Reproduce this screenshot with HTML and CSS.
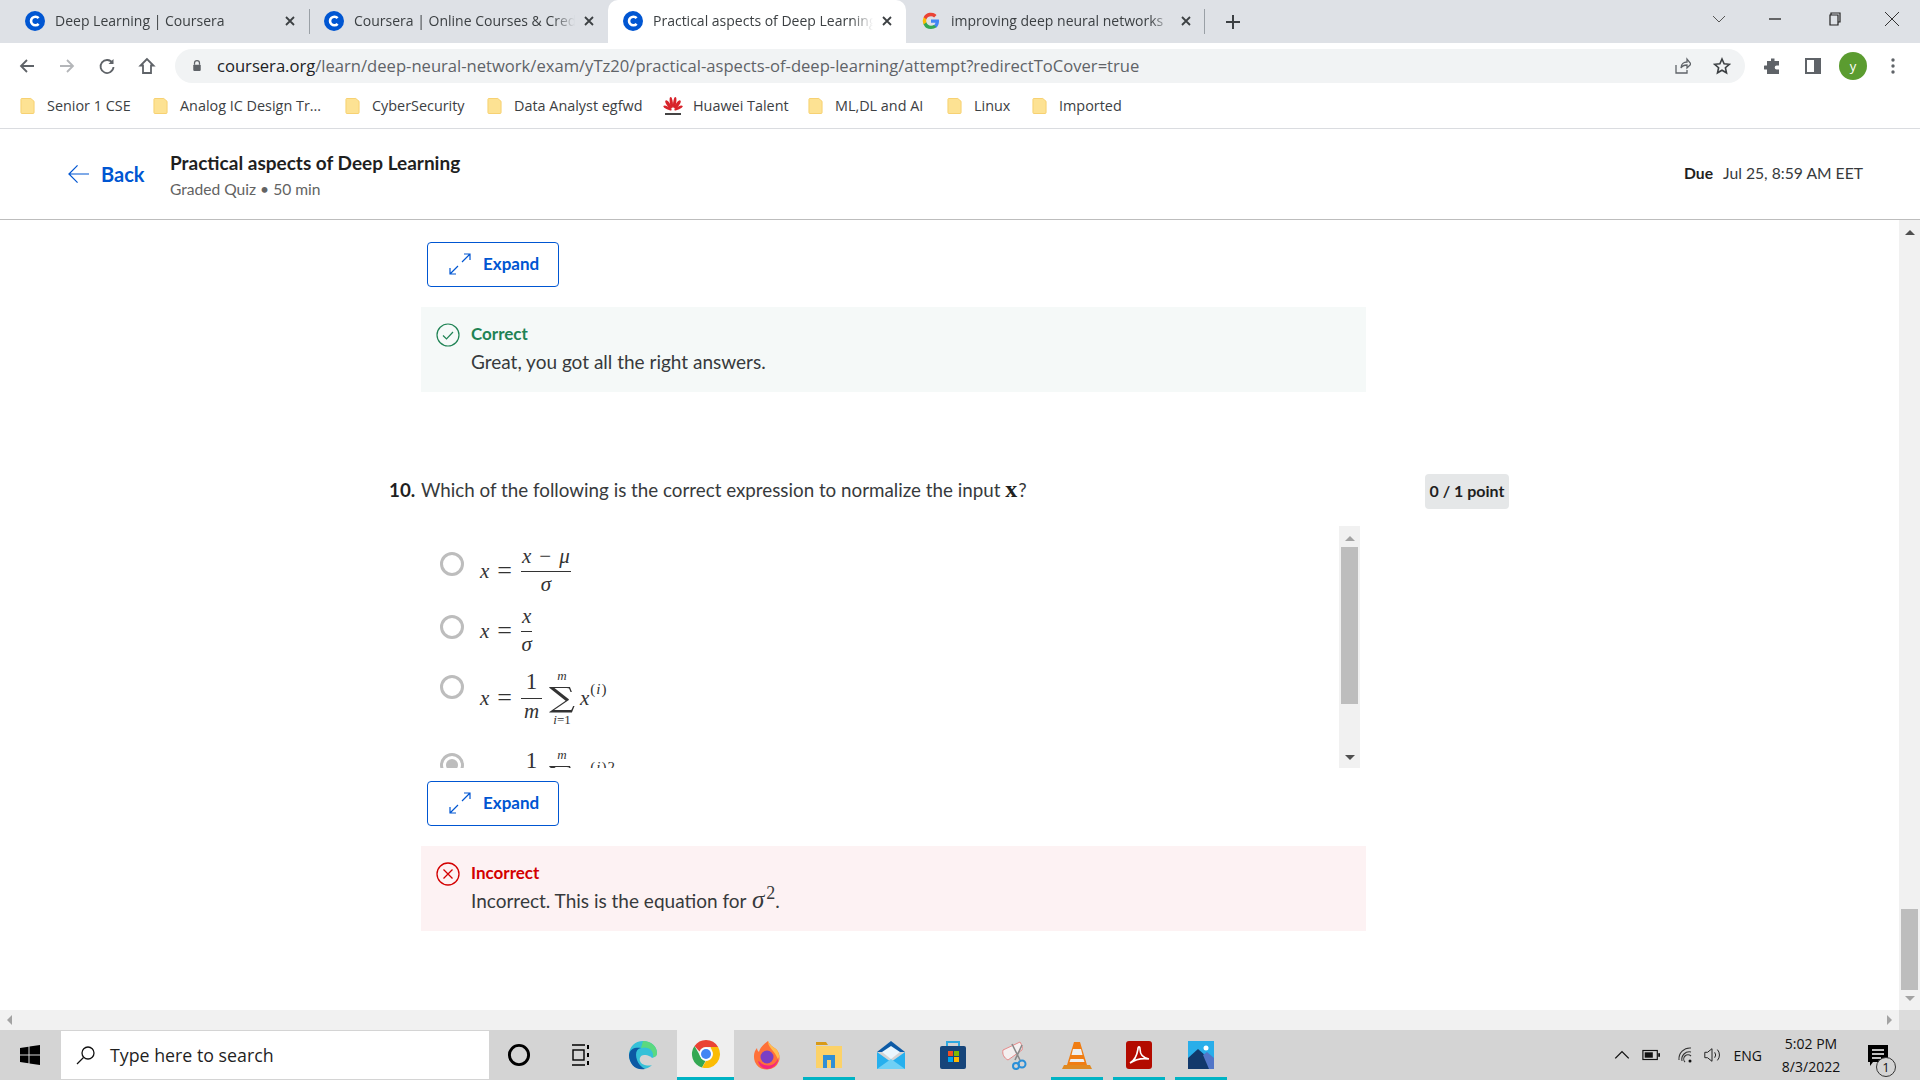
FILE: index.html
```html
<!DOCTYPE html>
<html lang="en">
<head>
<meta charset="utf-8">
<title>Practical aspects of Deep Learning | Coursera</title>
<link rel="stylesheet" href="styles.css">
</head>
<body>
<svg class="defs" width="0" height="0" aria-hidden="true">
  <symbol id="coursera" viewBox="0 0 20 20"><circle cx="10" cy="10" r="10" fill="#0056d2"/><path d="M13.6 7.2A4.3 4.3 0 1 0 13.6 12.8" fill="none" stroke="#fff" stroke-width="2.6"/></symbol>
  <symbol id="close" viewBox="0 0 12 12"><path d="M2 2L10 10M10 2L2 10" stroke="#3c4043" stroke-width="1.8" fill="none"/></symbol>
  <symbol id="folder" viewBox="0 0 16 18"><path d="M1.5 1h10l3.500 3v12a1 1 0 0 1-1 1H2a1 1 0 0 1-1-1V2z" fill="#fde293" stroke="#f6cf6c"/></symbol>
  <symbol id="expand" viewBox="0 0 24 24"><path d="M2 22L10 14M14 10L22 2M16 2H22V8M2 16V22H8" fill="none" stroke="#0056d2" stroke-width="1.200"/></symbol>
</svg>

<header class="tabbar">
  <div class="tab"><svg class="fav"><use href="#coursera"/></svg><span class="tab-title">Deep Learning | Coursera</span><svg class="tab-x"><use href="#close"/></svg></div>
  <div class="tab tab-sep"><svg class="fav"><use href="#coursera"/></svg><span class="tab-title">Coursera | Online Courses &amp; Credentials</span><svg class="tab-x"><use href="#close"/></svg></div>
  <div class="tab tab-active"><svg class="fav"><use href="#coursera"/></svg><span class="tab-title">Practical aspects of Deep Learning</span><svg class="tab-x"><use href="#close"/></svg></div>
  <div class="tab tab-end">
    <svg class="fav" viewBox="0 0 20 20"><path d="M18 10.200c0-.6 0-1.200-.2-1.700H10v3.300h4.500a3.800 3.800 0 0 1-1.700 2.500v2.100h2.700c1.600-1.500 2.500-3.600 2.500-6.200z" fill="#4285f4"/><path d="M10 18c2.200 0 4.100-.7 5.500-2l-2.700-2.100c-.7.500-1.700.8-2.800.8-2.100 0-3.900-1.400-4.600-3.400H2.600v2.100A8 8 0 0 0 10 18z" fill="#34a853"/><path d="M5.400 11.300a4.800 4.800 0 0 1 0-3V6.200H2.600a8 8 0 0 0 0 7.200z" fill="#fbbc05"/><path d="M10 5.200c1.200 0 2.300.4 3.100 1.200l2.400-2.400A8 8 0 0 0 2.600 6.200l2.800 2.100c.7-1.900 2.500-3.100 4.600-3.100z" fill="#ea4335"/></svg>
    <span class="tab-title">improving deep neural networks</span><svg class="tab-x"><use href="#close"/></svg></div>
  <svg class="newtab" viewBox="0 0 16 16"><path d="M8 1v14M1 8h14" stroke="#3c4043" stroke-width="2"/></svg>
  <div class="winctl">
    <svg class="wc" viewBox="0 0 14 14"><path d="M1 4l6 6 6-6" fill="none" stroke="#555" stroke-width="1"/></svg>
    <svg class="wc" viewBox="0 0 14 14"><path d="M1 7h12" stroke="#222" stroke-width="1.300"/></svg>
    <svg class="wc" viewBox="0 0 14 14"><path d="M3 3V1h9v9h-2M2 3h8v10H2z" fill="none" stroke="#222" stroke-width="1.200"/></svg>
    <svg class="wc" viewBox="0 0 14 14"><path d="M0 0l14 14M14 0L0 14" stroke="#333" stroke-width="1"/></svg>
  </div>
</header>

<nav class="toolbar">
  <svg class="tool" viewBox="0 0 18 18"><path d="M16 9H3M9 3L3 9l6 6" fill="none" stroke="#5f6368" stroke-width="1.800"/></svg>
  <svg class="tool" viewBox="0 0 18 18"><path d="M2 9h13M9 3l6 6-6 6" fill="none" stroke="#b4b6b9" stroke-width="1.800"/></svg>
  <svg class="tool" viewBox="0 0 18 18"><path d="M14.500 6A6.500 6.500 0 1 0 15.500 10" fill="none" stroke="#5f6368" stroke-width="1.800"/><path d="M15.500 2v5h-5z" fill="#5f6368"/></svg>
  <svg class="tool" viewBox="0 0 18 18"><path d="M9 2L2.500 8.500H5V16h8V8.500h2.500z" fill="none" stroke="#5f6368" stroke-width="1.800"/></svg>
  <div class="omnibox">
    <svg class="lock" viewBox="0 0 12 14"><path d="M3 6V4a3 3 0 0 1 6 0v2" fill="none" stroke="#5f6368" stroke-width="1.500"/><rect x="1.500" y="6" width="9" height="7.500" rx="1" fill="#5f6368"/></svg>
    <span class="url"><span class="url-host">coursera.org</span>/learn/deep-neural-network/exam/yTz20/practical-aspects-of-deep-learning/attempt?redirectToCover=true</span>
    <svg class="omni-ic" viewBox="0 0 18 18"><path d="M3 8v8h11v-3M8 11c0-4 3-6 6-6V2l4 5-4 4V8c-3 0-5 1-6 3z" fill="none" stroke="#5f6368" stroke-width="1.300"/></svg>
    <svg class="omni-ic" viewBox="0 0 18 18"><path d="M9 2l2.100 4.800 5.200.5-3.900 3.400 1.100 5.100L9 13.200l-4.500 2.600 1.100-5.100-3.900-3.400 5.200-.5z" fill="none" stroke="#3c4043" stroke-width="1.600"/></svg>
  </div>
  <svg class="tool-r ext" viewBox="0 0 18 18"><path d="M7 1.500h3.500V4H15v4.500h-2.300a2 2 0 0 0 0 4H15V17H3v-4.500H1a2 2 0 0 1 0-4h2V4h4z" fill="#5f6368"/></svg>
  <svg class="tool-r" viewBox="0 0 18 18"><rect x="2" y="2" width="14" height="14" fill="none" stroke="#5f6368" stroke-width="2"/><rect x="10" y="2" width="6" height="14" fill="#5f6368"/></svg>
  <span class="avatar">y</span>
  <svg class="tool-dots" viewBox="0 0 4 18"><circle cx="2" cy="3" r="1.700" fill="#5f6368"/><circle cx="2" cy="9" r="1.700" fill="#5f6368"/><circle cx="2" cy="15" r="1.700" fill="#5f6368"/></svg>
</nav>

<div class="bookmarks">
  <div class="bm"><svg class="bm-ic"><use href="#folder"/></svg>Senior 1 CSE</div>
  <div class="bm"><svg class="bm-ic"><use href="#folder"/></svg>Analog IC Design Tr...</div>
  <div class="bm"><svg class="bm-ic"><use href="#folder"/></svg>CyberSecurity</div>
  <div class="bm"><svg class="bm-ic"><use href="#folder"/></svg>Data Analyst egfwd</div>
  <div class="bm bm-hw"><svg class="bm-ic hw" viewBox="0 0 20 20"><g fill="#d8232a"><ellipse cx="8.300" cy="6.500" rx="1.500" ry="5.500" transform="rotate(-8 8.300 6.500)"/><ellipse cx="11.700" cy="6.500" rx="1.500" ry="5.500" transform="rotate(8 11.700 6.500)"/><ellipse cx="5.500" cy="8.500" rx="1.700" ry="5" transform="rotate(-35 5.500 8.500)"/><ellipse cx="14.500" cy="8.500" rx="1.700" ry="5" transform="rotate(35 14.500 8.500)"/><ellipse cx="4.500" cy="12" rx="1.500" ry="4.500" transform="rotate(-65 4.500 12)"/><ellipse cx="15.500" cy="12" rx="1.500" ry="4.500" transform="rotate(65 15.500 12)"/></g><rect x="2" y="17" width="16" height="2" fill="#444"/></svg>Huawei Talent</div>
  <div class="bm"><svg class="bm-ic"><use href="#folder"/></svg>ML,DL and AI</div>
  <div class="bm"><svg class="bm-ic"><use href="#folder"/></svg>Linux</div>
  <div class="bm"><svg class="bm-ic"><use href="#folder"/></svg>Imported</div>
</div>

<div class="quiz-head">
  <a class="back"><svg class="back-ic" viewBox="0 0 22 20"><path d="M22 10H1M10 1l-9 9 9 9" fill="none" stroke="#0056d2" stroke-width="1.300"/></svg>Back</a>
  <div class="head-titles">
    <div class="head-title">Practical aspects of Deep Learning</div>
    <div class="head-sub">Graded Quiz • 50 min</div>
  </div>
  <div class="due"><b>Due</b><span>Jul 25, 8:59 AM EET</span></div>
</div>

<div class="viewport">
  <main class="content">
    <div class="quiz">
      <a class="expand"><svg class="expand-ic"><use href="#expand"/></svg>Expand</a>
      <section class="feedback ok">
        <svg class="fb-ic" viewBox="0 0 24 24"><circle cx="12" cy="12" r="11" fill="none" stroke="#1f8354" stroke-width="1.200"/><path d="M7 12.500l3.500 3.500L17 9" fill="none" stroke="#1f8354" stroke-width="1.200"/></svg>
        <div><div class="fb-head ok-text">Correct</div><div class="fb-body">Great, you got all the right answers.</div></div>
      </section>
      <div class="qrow">
        <div class="qtext"><b class="qnum">10.</b>Which of the following is the correct expression to normalize the input <b class="mathb">x</b>?</div>
        <div class="chip">0 / 1 point</div>
      </div>
      <div class="optbox">
        <div class="opts">
          <div class="opt opt1"><span class="radio"></span><div class="math m1"><i>x</i><span class="eq">=</span><span class="frac"><span class="num"><i>x</i><span class="minus">−</span><i>μ</i></span><span class="den"><i>σ</i></span></span></div></div>
          <div class="opt opt2"><span class="radio"></span><div class="math m2"><i>x</i><span class="eq">=</span><span class="frac"><span class="num"><i>x</i></span><span class="den"><i>σ</i></span></span></div></div>
          <div class="opt opt3"><span class="radio"></span><div class="math m3"><i>x</i><span class="eq">=</span><span class="frac big"><span class="num">1</span><span class="den"><i>m</i></span></span><span class="sum"><small><i>m</i></small><span class="sigma">∑</span><small><i>i</i>=1</small></span><i>x</i><sup>(<i>i</i>)</sup></div></div>
          <div class="opt opt4"><span class="radio on"></span><div class="math m4"><i>x</i><span class="eq">=</span><span class="frac big"><span class="num">1</span><span class="den"><i>m</i></span></span><span class="sum"><small><i>m</i></small><span class="sigma">∑</span><small><i>i</i>=1</small></span><i>x</i><sup>(<i>i</i>)2</sup></div></div>
        </div>
        <div class="sbar inner">
          <span class="arr up dim"></span>
          <span class="thumb inner-thumb"></span>
          <span class="arr down"></span>
        </div>
      </div>
      <a class="expand expand2"><svg class="expand-ic"><use href="#expand"/></svg>Expand</a>
      <section class="feedback bad">
        <svg class="fb-ic" viewBox="0 0 24 24"><circle cx="12" cy="12" r="11" fill="none" stroke="#d30001" stroke-width="1.300"/><path d="M7.500 7.500l9 9M16.500 7.500l-9 9" fill="none" stroke="#d30001" stroke-width="1.300"/></svg>
        <div><div class="fb-head bad-text">Incorrect</div><div class="fb-body">Incorrect. This is the equation for <span class="inl"><i>σ</i><sup>2</sup></span>.</div></div>
      </section>
    </div>
  </main>
  <div class="sbar page">
    <span class="arr up"></span>
    <span class="thumb page-thumb"></span>
    <span class="arr down dim"></span>
  </div>
</div>

<div class="hscroll"><span class="arr left dim"></span><span class="arr right dim"></span><span class="corner"></span></div>

<footer class="taskbar">
  <svg class="start" viewBox="0 0 20 20"><path d="M0 3l8.500-1.200v7.700H0zM9.500 1.600L20 0v9.500H9.500zM0 10.500h8.500v7.700L0 17zM9.500 10.500H20V20L9.500 18.400z" fill="#000"/></svg>
  <div class="search"><svg class="search-ic" viewBox="0 0 20 20"><circle cx="12" cy="8" r="6" fill="none" stroke="#111" stroke-width="1.300"/><path d="M7.500 12.500L1 19" stroke="#111" stroke-width="1.300"/></svg><span>Type here to search</span></div>
  <div class="tb-apps">
    <div class="app"><svg class="cortana" viewBox="0 0 20 20"><circle cx="10" cy="10" r="8" fill="none" stroke="#000" stroke-width="2.400"/></svg></div>
    <div class="app"><svg class="taskview" viewBox="0 0 20 22"><path d="M1 1h13M1 21h13M15 1v0" stroke="#000" stroke-width="1.400"/><rect x="2" y="6" width="11" height="10" fill="none" stroke="#000" stroke-width="1.400"/><path d="M17 1v4M17 9v4M17 17v4" stroke="#000" stroke-width="2"/></svg></div>
    <div class="app"><svg class="appic" viewBox="0 0 30 30"><path d="M15 1C7 1 1 7 1 15c0 8 6 14 13 14 5 0 8-2 10-4-3 1-10 1-12-4-1-3 1-6 4-6 5 0 7 2 8 3 3-1 5-2 5-5C29 6 23 1 15 1z" fill="#35c1d8"/><path d="M1 15C2 8 8 7 13 8c-5 1-6 6-4 12 1 3 4 7 8 9-9 2-16-5-16-14z" fill="#0c59a4"/><path d="M15 1c8 0 14 5 14 12 0 3-2 4-4 4 1-7-5-11-12-9z" fill="#5bd97f"/></svg></div>
    <div class="app app-chrome"><svg class="appic" viewBox="0 0 30 30"><path d="M15 1a14 14 0 0 1 12.100 7H15a7 7 0 0 0-6.500 4.500L3.500 7A14 14 0 0 1 15 1z" fill="#ea4335"/><path d="M3.500 7l6 10.500a7 7 0 0 0 5 4.500L11 28.500A14 14 0 0 1 3.500 7z" fill="#34a853"/><path d="M27.100 8A14 14 0 0 1 11 28.500L15 22a7 7 0 0 0 6-10.500L19.500 8z" fill="#fbbc05"/><circle cx="15" cy="15" r="6.500" fill="#fff"/><circle cx="15" cy="15" r="5" fill="#4285f4"/></svg></div>
    <div class="app"><svg class="appic" viewBox="0 0 30 30"><path d="M16 1c1 3 5 6 8 8 4 4 4 9 3 12a13 13 0 0 1-24 1C1 17 2 11 5 8c0 2 1 3 2 4 1-5 5-8 9-11z" fill="#ff7139"/><path d="M16 1c1 3 5 6 8 8 3 3 4 8 3 12-2-3-3-7-6-10-2-3-5-5-5-10z" fill="#ffbd4f"/><circle cx="15" cy="17" r="6.500" fill="#7b3fc4"/><path d="M8 22c3 4 10 5 15 1 2-2 3-4 4-6-1 8-7 12-12 12-4 0-8-3-9-8z" fill="#f5267e"/></svg></div>
    <div class="app app-run"><svg class="appic" viewBox="0 0 30 30"><path d="M2 2h10l2 3H2z" fill="#d89a18"/><path d="M2 6h26v22H2z" fill="#fcd268"/><path d="M9 28V15h12v13h-4v-8h-4v8z" fill="#2f8fd6"/></svg></div>
    <div class="app"><svg class="appic" viewBox="0 0 30 30"><path d="M15 1L1 12h28z" fill="#0c5aa6"/><path d="M1 12l14 10 14-10v17H1z" fill="#26b0ee"/><path d="M6 12l9-6 9 6-9 7z" fill="#e9f6fd"/><path d="M1 29l14-10 14 10z" fill="#6fd0f5"/></svg></div>
    <div class="app"><svg class="appic" viewBox="0 0 30 30"><path d="M9 6V2h12v4" fill="none" stroke="#2fa8e0" stroke-width="2"/><rect x="2" y="6" width="26" height="23" rx="2" fill="#16457a"/><rect x="10" y="11" width="5" height="5" fill="#f25022"/><rect x="16" y="11" width="5" height="5" fill="#7fba00"/><rect x="10" y="17" width="5" height="5" fill="#00a4ef"/><rect x="16" y="17" width="5" height="5" fill="#ffb900"/></svg></div>
    <div class="app"><svg class="appic" viewBox="0 0 30 30"><path d="M3 10L20 2c2 3 3 6 2 8L8 20C4 18 2 14 3 10z" fill="#f4f0f0" stroke="#e68a8a"/><path d="M12 4l8 16M22 5L15 20" stroke="#8a8a8a" stroke-width="1.600"/><circle cx="22" cy="24" r="3.500" fill="none" stroke="#2a8fd8" stroke-width="2"/><circle cx="16" cy="26" r="3" fill="none" stroke="#2a8fd8" stroke-width="2"/></svg></div>
    <div class="app app-run"><svg class="appic" viewBox="0 0 30 30"><path d="M12 2h6l7 23H5z" fill="#f07d13"/><path d="M11 9h8l1.500 6h-11z" fill="#eee"/><path d="M8.500 19h13l1 3h-15z" fill="#eee"/><path d="M2 25h26l2 4H0z" fill="#e08a22"/></svg></div>
    <div class="app app-run"><svg class="appic" viewBox="0 0 30 30"><rect x="2" y="1" width="26" height="28" rx="3" fill="#b30b00"/><path d="M6 23c4-2 7-8 8-14 0-3 2-3 2 0 0 5 3 9 9 10-6-1-13 0-19 4z" fill="none" stroke="#fff" stroke-width="1.600"/></svg></div>
    <div class="app app-run"><svg class="appic" viewBox="0 0 30 30"><rect x="2" y="1" width="26" height="28" fill="#29aeea"/><circle cx="20" cy="8" r="2.500" fill="#fff"/><path d="M2 29V18L12 9l16 14v6z" fill="#12396b"/><path d="M17 15l4-3 7 6v11h-5z" fill="#5276c8"/></svg></div>
  </div>
  <div class="tray">
    <svg class="tray-ic ti-chev" viewBox="0 0 16 16"><path d="M2 11l6-6 6 6" fill="none" stroke="#111" stroke-width="1.200"/></svg>
    <svg class="tray-ic ti-batt" viewBox="0 0 20 16"><rect x="1" y="3" width="16" height="10" fill="none" stroke="#111" stroke-width="1.300"/><rect x="3" y="5" width="9" height="6" fill="#111"/><rect x="18" y="6" width="2" height="4" fill="#111"/></svg>
    <svg class="tray-ic ti-wifi" viewBox="0 0 18 18"><path d="M2 14A11 11 0 0 1 14 2M5 15A7.500 7.500 0 0 1 14 6M8 16a4 4 0 0 1 6-6" fill="none" stroke="#333" stroke-width="1.100"/><circle cx="13" cy="15" r="1.500" fill="#111"/></svg>
    <svg class="tray-ic" viewBox="0 0 20 18"><path d="M2 6h3l5-4v14l-5-4H2z" fill="none" stroke="#222" stroke-width="1.100"/><path d="M13 6a5 5 0 0 1 0 6M16 3a9 9 0 0 1 0 12" fill="none" stroke="#222" stroke-width="1.100"/></svg>
    <span class="lang">ENG</span>
    <div class="clock"><span>5:02 PM</span><span>8/3/2022</span></div>
    <div class="notif">
      <svg class="notif-ic" viewBox="0 0 20 22"><path d="M0 0h20v17H5l-3 4v-4H0z" fill="#000"/><path d="M4 5h12M4 9h12M4 13h9" stroke="#fff" stroke-width="1.300"/></svg>
      <span class="badge">1</span>
    </div>
  </div>
</footer>
</body>
</html>
```
FILE: styles.css
```css
* { box-sizing: border-box; }
html, body { margin: 0; height: 100%; }
body {
  width: 1920px;
  height: 1080px;
  overflow: hidden;
  display: flex;
  flex-direction: column;
  background: #fff;
  font-family: "Open Sans", "Noto Sans", sans-serif;
  color: #1f1f1f;
}
.defs { position: absolute; }
a { display: inline-flex; }

/* tabs */
.tabbar { height: 43px; flex: none; background: #dee1e6; display: flex; align-items: stretch; padding-left: 10px; position: relative; }
.tab { width: 299px; display: flex; align-items: center; padding: 0 13px 2px 15px; font-size: 14px; color: #3c4043; position: relative; }
.tab-sep::before { content: ""; position: absolute; left: 0; top: 9px; bottom: 9px; width: 1px; background: #9aa0a6; }
.tab-active { background: #fff; border-radius: 10px 10px 0 0; width: 298px; color: #3c4043; }
.tab-end::after { content: ""; position: absolute; right: 0; top: 9px; bottom: 9px; width: 1px; background: #9aa0a6; }
.fav { width: 20px; height: 20px; flex: none; }
.tab-title { flex: 1; margin-left: 10px; white-space: nowrap; overflow: hidden; -webkit-mask-image: linear-gradient(90deg, #000 90%, transparent); mask-image: linear-gradient(90deg, #000 90%, transparent); }
.tab-x { width: 12px; height: 12px; flex: none; margin-left: 8px; }
.newtab { width: 16px; height: 16px; align-self: center; margin-left: 20px; flex: none; }
.winctl { margin-left: auto; display: grid; grid-template-columns: 52px 60px 60px 54px; align-items: center; justify-items: center; padding: 0 1px 6px 0; }
.wc { width: 14px; height: 14px; }

/* toolbar */
.toolbar { height: 45px; flex: none; background: #fff; display: flex; align-items: center; padding: 0 18px 0 18px; }
.tool { width: 18px; height: 18px; flex: none; margin-right: 22px; }
.omnibox { width: 1570px; height: 34px; margin-left: -3px; background: #f1f3f4; border-radius: 17px; display: flex; align-items: center; padding: 0 14px 0 17px; font-size: 16.6px; flex: none; }
.lock { width: 10px; height: 13px; flex: none; }
.url { flex: 1; margin-left: 15px; color: #5f6368; white-space: nowrap; overflow: hidden; }
.url-host { color: #202124; }
.omni-ic { width: 18px; height: 18px; flex: none; margin-left: 22px; }
.tool-r { width: 18px; height: 18px; flex: none; margin-left: 22px; }
.tool-r.ext { margin-left: 19px; }
.avatar { width: 28px; height: 28px; margin-left: 17px; border-radius: 50%; background: #5b9c30; color: #fff; font-size: 13px; display: flex; align-items: center; justify-content: center; flex: none; }
.tool-dots { width: 4px; height: 18px; margin-left: 24px; flex: none; }

/* bookmarks */
.bookmarks { height: 41px; flex: none; border-bottom: 1px solid #dadce0; display: grid; grid-template-columns: 133px 192px 142px 186px 135px 139px 85px 1fr; align-items: center; padding: 0 0 5px 20px; font-size: 14.4px; color: #3c4043; }
.bm { display: flex; align-items: center; gap: 12px; white-space: nowrap; }
.bm-ic { width: 15px; height: 18px; flex: none; }
.hw { width: 20px; height: 20px; }
.bm-hw { margin-left: -10px; gap: 10px; }

/* coursera header */
.quiz-head { height: 91px; flex: none; border-bottom: 1px solid #bdbdbd; display: flex; align-items: center; padding: 0 57px 0 68px; }
.back { align-items: center; gap: 12px; color: #0056d2; font-weight: 700; font-family: "Lato", sans-serif; font-size: 20px; width: 102px; }
.back-ic { width: 21px; height: 20px; flex: none; }
.head-titles { display: flex; flex-direction: column; gap: 3px; padding-top: 2px; }
.head-title { font-family: "Lato", sans-serif; font-size: 19px; font-weight: 700; line-height: 24px; color: #1f1f1f; }
.head-sub { font-family: "Lato", sans-serif; font-size: 15.6px; line-height: 22px; color: #636363; }
.due { margin-left: auto; padding-bottom: 2px; font-family: "Lato", sans-serif; font-size: 15.7px; display: flex; gap: 10px; color: #373a3c; }
.due b { color: #1f1f1f; }

/* content */
.viewport { flex: 1; min-height: 0; display: flex; }
.content { flex: 1; min-width: 0; overflow: hidden; }
.quiz { margin-left: 389px; width: 1120px; padding-top: 22px; display: flex; flex-direction: column; font-family: "Lato", sans-serif; }
.expand { width: 132px; height: 45px; margin-left: 38px; border: 1px solid #0056d2; border-radius: 4px; align-items: center; padding: 0 0 2px 20px; gap: 11px; color: #0056d2; font-weight: 700; font-size: 17px; }
.expand-ic { width: 24px; height: 24px; flex: none; }
.expand2 { margin-top: 13px; }
.feedback { width: 945px; height: 85px; margin: 20px 0 0 32px; display: flex; align-items: flex-start; gap: 11px; padding: 15px 15px; }
.ok { background: #f5f9f8; }
.bad { background: #fdf2f3; }
.fb-ic { width: 24px; height: 24px; flex: none; margin-top: 1px; }
.fb-head { font-size: 17px; font-weight: 700; line-height: 24px; }
.ok-text { color: #1f8354; }
.bad-text { color: #d30001; }
.fb-body { font-size: 19px; line-height: 32px; color: #373a3c; white-space: nowrap; }
.inl { font-family: "Liberation Serif", serif; font-size: 25px; line-height: 20px; margin-left: 1px; }
.inl sup { font-size: 18px; line-height: 0; margin-left: 2px; }

.qrow { height: 35px; margin-top: 82px; display: flex; justify-content: space-between; align-items: center; }
.qtext { font-size: 18.8px; color: #373a3c; display: flex; align-items: baseline; white-space: pre-wrap; padding-bottom: 4px; }
.qnum { color: #1f1f1f; width: 32px; flex: none; }
.mathb { font-family: "Liberation Serif", serif; font-size: 24px; margin: 0 1px 0 0; color: #1f1f1f; }
.chip { width: 84px; height: 35px; padding-bottom: 2px; background: #e5e7e8; border-radius: 4px; font-size: 16px; font-weight: 700; color: #1f1f1f; display: flex; align-items: center; justify-content: center; white-space: nowrap; }

.optbox { width: 939px; height: 242px; margin: 17px 0 0 32px; display: flex; justify-content: space-between; }
.opts { flex: 1; height: 242px; overflow: hidden; padding: 26px 0 0 19px; }
.opt { display: flex; align-items: flex-start; }
.opt1 { height: 63px; }
.opt2 { height: 60px; }
.opt3 { height: 78px; }
.opt4 { height: 78px; }
.radio { width: 24px; height: 24px; border: 3px solid #bdbdbd; border-radius: 50%; flex: none; display: flex; align-items: center; justify-content: center; background: #fff; }
.radio.on::after { content: ""; width: 12px; height: 12px; border-radius: 50%; background: #bdbdbd; }
.math { margin-left: 16px; display: flex; align-items: center; font-family: "Liberation Serif", serif; font-size: 21px; color: #333; white-space: nowrap; }
.m1 { height: 38px; }
.m2 { height: 32px; }
.m3 { height: 46px; }
.m4 { height: 48px; }
.eq { margin: 0 9px 0 8px; font-size: 26px; line-height: 24px; }
.minus { margin: 0 8px; }
.frac { display: flex; flex-direction: column; align-items: stretch; text-align: center; padding: 0; }
.num { height: 26px; line-height: 22px; padding: 0 1px; border-bottom: 1px solid #333; box-sizing: content-box; }
.den { height: 26px; line-height: 25px; }
.big .num { font-size: 23px; line-height: 20px; }
.big { min-width: 21px; }
.sum { display: flex; flex-direction: column; align-items: center; margin: 0 4px 0 6px; width: 28px; line-height: 1; }
.sum small { font-size: 13px; line-height: 12px; }
.sigma { font-family: "DejaVu Serif", serif; font-size: 28px; line-height: 32px; transform: scaleX(1.3); }
.math sup { font-size: 15px; line-height: 0; align-self: flex-start; margin-top: 14px; margin-left: 1px; letter-spacing: 1px; }

/* scrollbars */
.sbar { display: flex; flex-direction: column; align-items: center; background: #f1f1f1; flex: none; width: 21px; }
.sbar.inner { height: 242px; }
.sbar.page { height: 100%; }
.thumb { width: 17px; background: #bdbdbd; display: block; }
.inner-thumb { height: 157px; margin-top: 6px; margin-bottom: auto; }
.page-thumb { height: 81px; margin-top: auto; }
.arr { width: 0; height: 0; border: 5px solid transparent; display: block; flex: none; }
.up { border-top: 0; border-bottom: 5px solid #505050; margin-top: 9px; }
.up.dim { border-bottom-color: #a3a3a3; }
.sbar .up { margin-top: 10px; }
.down { border-bottom: 0; border-top: 5px solid #505050; margin-bottom: 8px; }
.down.dim { border-top-color: #a3a3a3; }
.page-thumb + .down { margin-top: 6px; margin-bottom: 9px; }

.hscroll { height: 20px; flex: none; background: #f1f1f1; display: flex; align-items: center; justify-content: space-between; padding-left: 7px; }
.left { border-left: 0; border-right: 5px solid #a3a3a3; }
.right { border-right: 0; border-left: 5px solid #a3a3a3; margin-left: auto; margin-right: 7px; }
.corner { width: 21px; height: 20px; background: #dcdcdc; flex: none; }

/* taskbar */
.taskbar { height: 50px; flex: none; background: #d4d4d4; display: flex; align-items: stretch; }
.start { width: 20px; height: 20px; margin: 15px 21px 0 20px; flex: none; }
.search { width: 428px; margin: 1px 0; background: #fff; display: flex; align-items: center; padding-left: 15px; gap: 14px; font-size: 17.8px; color: #1f1f1f; flex: none; }
.search-ic { width: 20px; height: 20px; flex: none; }
.tb-apps { display: flex; margin-left: -1px; }
.app { width: 62px; display: flex; align-items: center; justify-content: center; position: relative; flex: none; }
.app-chrome { background: #efefef; width: 57px; margin: 0 2px 0 3px; border-bottom: 3px solid #00b3c4; }
.app-run::after { content: ""; position: absolute; left: 5px; right: 5px; bottom: 0; height: 3px; background: #00b3c4; }
.appic { width: 30px; height: 30px; }
.cortana { width: 24px; height: 24px; }
.taskview { width: 20px; height: 22px; }
.tray { margin-left: auto; display: flex; align-items: center; font-size: 14px; color: #111; }
.tray-ic { width: 18px; height: 18px; margin-right: 13px; flex: none; }
.ti-chev { margin-right: 11px; }
.ti-batt { margin-right: 17px; }
.ti-wifi { margin-right: 8px; }
.lang { margin-right: 20px; }
.clock { display: flex; flex-direction: column; align-items: center; gap: 5px; width: 58px; font-size: 14px; line-height: 18px; white-space: nowrap; }
.notif { position: relative; width: 80px; height: 100%; flex: none; }
.notif-ic { position: absolute; left: 28px; top: 15px; width: 20px; height: 22px; }
.badge { position: absolute; left: 36px; top: 27px; width: 20px; height: 20px; border: 1px solid #333; border-radius: 50%; background: #d4d4d4; font-size: 13px; display: flex; align-items: center; justify-content: center; }
```
